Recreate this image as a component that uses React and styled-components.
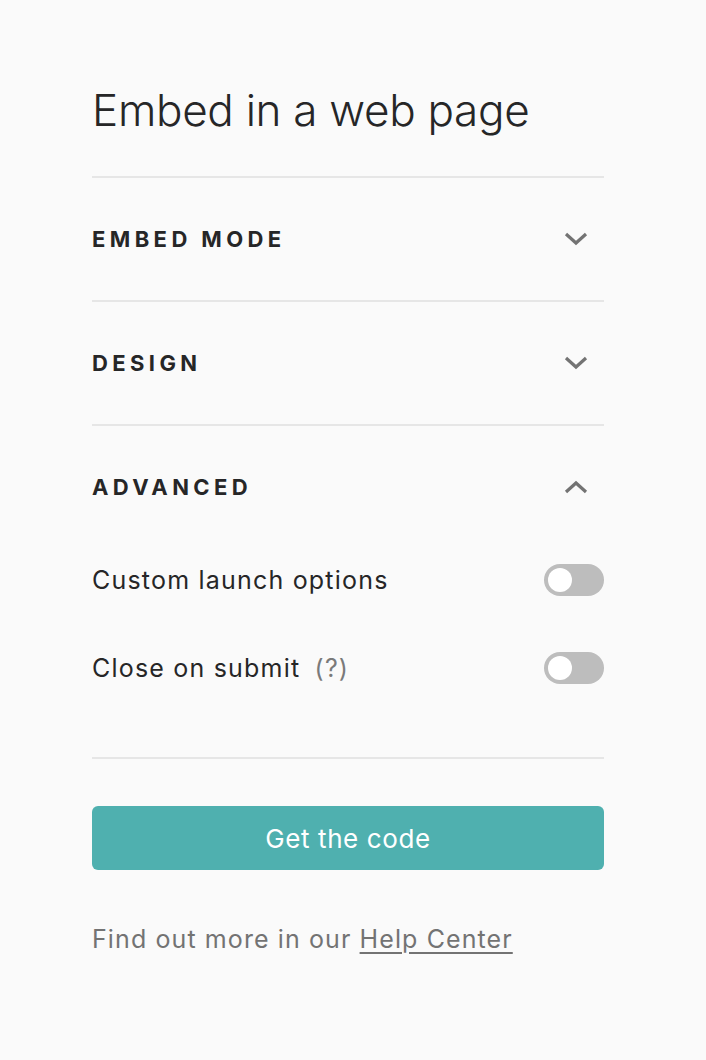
import React from "react";
import styled, { createGlobalStyle } from "styled-components";

const GlobalStyle = createGlobalStyle`
  html, body {
    margin: 0;
    padding: 0;
    background: #fafafa;
  }
  body {
    font-family: "Inter", "Liberation Sans", sans-serif;
    color: #262627;
  }
`;

function Chevron({ up }) {
  return (
    <svg width="24" height="14" viewBox="0 0 24 14" fill="none">
      <path
        d={up ? "M2 12L12 3L22 12" : "M2 2L12 11L22 2"}
        stroke="#737373"
        strokeWidth="3.2"
        strokeLinecap="butt"
        strokeLinejoin="miter"
      />
    </svg>
  );
}

function Section({ title, open, children }) {
  return (
    <Block>
      <Header>
        <HeaderTitle>{title}</HeaderTitle>
        <ChevronBox>
          <Chevron up={open} />
        </ChevronBox>
      </Header>
      {open && <Body>{children}</Body>}
    </Block>
  );
}

function App() {
  return (
    <Page>
      <GlobalStyle />
      <Panel>
        <Title>Embed in a web page</Title>
        <Section title="EMBED MODE" />
        <Section title="DESIGN" />
        <Section title="ADVANCED" open>
          <OptionRow>
            <OptionLabel>Custom launch options</OptionLabel>
            <Toggle />
          </OptionRow>
          <OptionRow>
            <OptionLabel>
              Close on submit <Hint>(?)</Hint>
            </OptionLabel>
            <Toggle />
          </OptionRow>
        </Section>
        <Footer>
          <CodeButton>Get the code</CodeButton>
          <HelpText>
            Find out more in our <HelpLink href="#">Help Center</HelpLink>
          </HelpText>
        </Footer>
      </Panel>
    </Page>
  );
}

const Page = styled.div`
  min-height: 1060px;
  background: #fafafa;
`;

const Panel = styled.div`
  width: 512px;
  margin: 0 auto 0 92px;
  padding-top: 82px;
`;

const Title = styled.h1`
  margin: 0;
  height: 94px;
  font-size: 44px;
  font-weight: 300;
  line-height: 56px;
  letter-spacing: -0.3px;
  color: #262627;
`;

const Block = styled.div`
  border-top: 2px solid #e6e6e6;
`;

const Header = styled.div`
  height: 122px;
  display: flex;
  align-items: center;
  justify-content: space-between;
`;

const HeaderTitle = styled.div`
  font-size: 22px;
  font-weight: 700;
  letter-spacing: 4.4px;
  color: #262627;
`;

const ChevronBox = styled.div`
  width: 24px;
  margin-right: 16px;
  display: flex;
  align-items: center;
`;

const Body = styled.div`
  display: flex;
  flex-direction: column;
  gap: 24px;
  padding-bottom: 57px;
`;

const OptionRow = styled.div`
  height: 64px;
  display: flex;
  align-items: center;
  justify-content: space-between;
`;

const OptionLabel = styled.div`
  font-size: 25px;
  letter-spacing: 1.2px;
  color: #262627;
`;

const Hint = styled.span`
  margin-left: 6px;
  color: #7a7a7a;
`;

const Toggle = styled.div`
  position: relative;
  width: 60px;
  height: 32px;
  border-radius: 16px;
  background: #bdbdbd;
  &::after {
    content: "";
    position: absolute;
    left: 4px;
    top: 4px;
    width: 24px;
    height: 24px;
    border-radius: 50%;
    background: #ffffff;
  }
`;

const Footer = styled.div`
  border-top: 2px solid #e6e6e6;
  padding-top: 47px;
`;

const CodeButton = styled.button`
  display: block;
  width: 100%;
  height: 64px;
  border: none;
  border-radius: 6px;
  background: #4fb0af;
  color: #ffffff;
  font-family: "Inter", "Liberation Sans", sans-serif;
  font-size: 26px;
  letter-spacing: 0.6px;
  cursor: pointer;
`;

const HelpText = styled.p`
  margin: 54px 0 0;
  font-size: 25px;
  letter-spacing: 1.1px;
  color: #737373;
`;

const HelpLink = styled.a`
  color: #737373;
  text-decoration: underline;
  text-underline-offset: 4px;
`;

export default App;
